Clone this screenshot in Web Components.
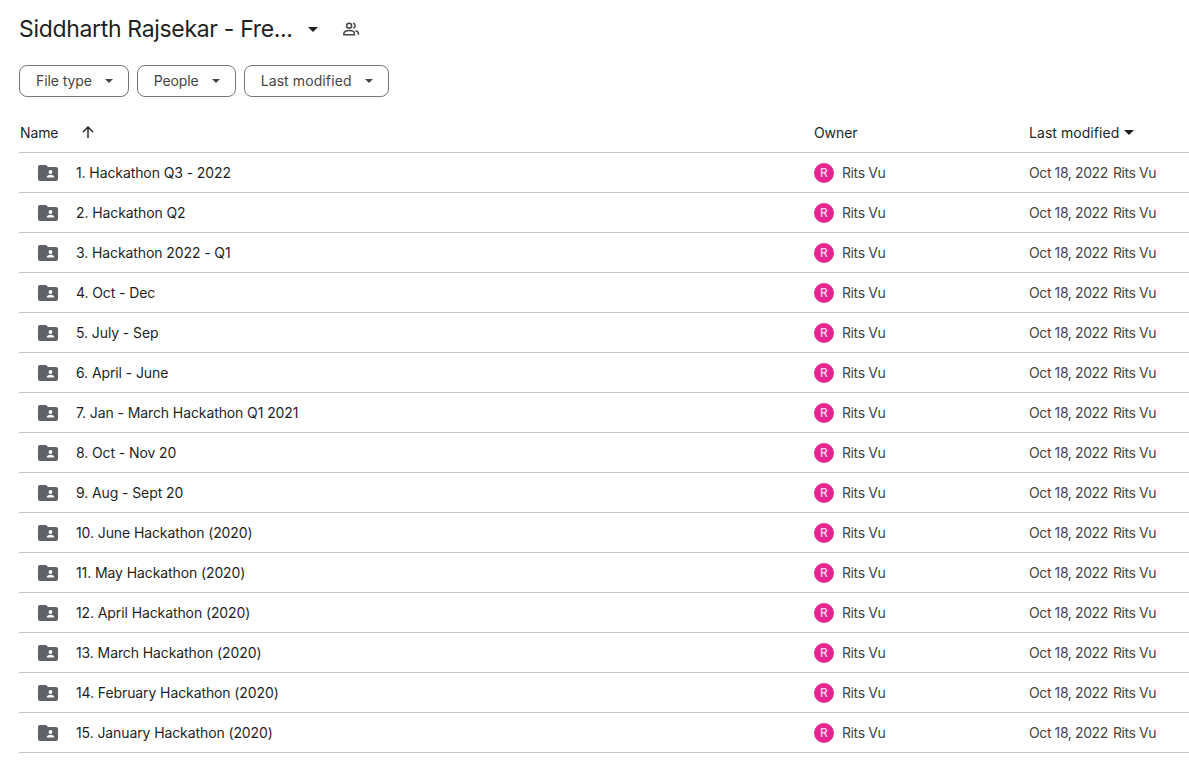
<!DOCTYPE html>
<html>
<head>
<meta charset="utf-8">
<title>Siddharth Rajsekar - Free</title>
<style>
  html, body { margin: 0; background: #fff; overflow: hidden; }
  body { font-family: Inter, Roboto, "Liberation Sans", sans-serif; color: #1f1f1f; }
</style>
</head>
<body>
<drive-page></drive-page>

<script>
const ARROW = `<svg width="10" height="5" viewBox="0 0 10 5"><path d="M0 0h10L5 5z" fill="currentColor"/></svg>`;

class DriveTitle extends HTMLElement {
  connectedCallback() {
    this.attachShadow({ mode: "open" });
    this.shadowRoot.innerHTML = `
      <style>
        :host { display: flex; align-items: center; height: 58px; padding-left: 19px; color: #1f1f1f; }
        .name { font-size: 23px; line-height: 32px; width: 276px; letter-spacing: -0.33px; white-space: nowrap; }
        .arrow { display: flex; margin-left: 13px; }
        .people { display: flex; margin-left: 24px; color: #444746; }
      </style>
      <span class="name"><slot></slot></span>
      <span class="arrow">${ARROW}</span>
      <span class="people">
        <svg width="18" height="18" viewBox="0 0 24 24" fill="none" stroke="currentColor" stroke-width="2">
          <circle cx="9.500" cy="7.500" r="3.300"/>
          <path d="M2.500 19.500v-1.800c0-2.300 3.300-3.700 7-3.700s7 1.400 7 3.700v1.800z"/>
          <path d="M15 4.300a3.300 3.300 0 0 1 0 6.400M18 14.200c2.300.6 3.800 1.800 3.800 3.500v1.800"/>
        </svg>
      </span>
    `;
  }
}
customElements.define("drive-title", DriveTitle);

class FilterChip extends HTMLElement {
  connectedCallback() {
    this.attachShadow({ mode: "open" });
    this.shadowRoot.innerHTML = `
      <style>
        :host {
          display: flex; align-items: center; box-sizing: border-box; height: 32px;
          border: 1px solid #747775; border-radius: 8px;
          padding: 0 15px 0 16px; gap: 13px;
          font-size: 14px; letter-spacing: var(--chip-spacing, -0.1px); color: #444746; white-space: nowrap;
        }
        .label { padding-bottom: 2px; }
        .arrow { display: flex; }
        svg { width: 8px; height: 4px; }
      </style>
      <span class="label"><slot></slot></span>
      <span class="arrow">${ARROW}</span>
    `;
  }
}
customElements.define("filter-chip", FilterChip);

class FileHeader extends HTMLElement {
  connectedCallback() {
    this.attachShadow({ mode: "open" });
    this.shadowRoot.innerHTML = `
      <style>
        :host {
          display: grid; grid-template-columns: 794px 215px 1fr; align-items: center;
          height: 40px; margin-left: 19px; border-bottom: 1px solid #c7c7c7; box-sizing: content-box;
          font-size: 14px; letter-spacing: -0.1px; color: #1f1f1f;
        }
        div { display: flex; align-items: center; padding-left: 1px; padding-top: 1px; }
        .up { margin-left: 22px; display: flex; margin-top: -1px; }
        .down { margin-left: 5px; display: flex; }
        .modified { letter-spacing: 0.05px; }
      </style>
      <div>Name
        <span class="up">
          <svg width="16" height="16" viewBox="0 0 16 16"><path d="M7.300 14V4.700L3.500 8.500 2.500 7.500 8 2l5.500 5.500-1 1-3.800-3.800V14z" fill="#1f1f1f"/></svg>
        </span>
      </div>
      <div>Owner</div>
      <div class="modified">Last modified<span class="down">${ARROW}</span></div>
    `;
  }
}
customElements.define("file-header", FileHeader);

class FileRow extends HTMLElement {
  connectedCallback() {
    this.attachShadow({ mode: "open" });
    this.shadowRoot.innerHTML = `
      <style>
        :host {
          display: grid; grid-template-columns: 795px 215px 1fr; align-items: center;
          height: 39px; margin-left: 19px; border-bottom: 1px solid #c7c7c7;
          font-size: 14px; letter-spacing: -0.1px; color: #444746;
        }
        .name { display: flex; align-items: center; color: #1f1f1f; padding-left: 19px; }
        .name svg { margin-right: 18px; flex: none; }
        .owner { display: flex; align-items: center; gap: 8px; letter-spacing: -0.4px; }
        .avatar {
          width: 20px; height: 20px; border-radius: 50%; background: #e52592;
          color: #fbd3e8; font-size: 12px; font-weight: 500; letter-spacing: 0;
          display: flex; align-items: center; justify-content: center;
        }
        .mod { display: flex; gap: 5px; letter-spacing: -0.4px; }
      </style>
      <div class="name">
        <svg width="20" height="16" viewBox="0 0 20 16">
          <path fill="#5f6368" d="M2 0h6l2 2h8c1.100 0 2 .9 2 2v10c0 1.100-.9 2-2 2H2c-1.100 0-2-.9-2-2V2C0 .9.900 0 2 0z"/>
          <circle cx="12.500" cy="7" r="1.900" fill="#fff"/>
          <path fill="#fff" d="M8.800 12.500v-.7c0-1.300 2.500-2 3.700-2s3.700.7 3.700 2v.7z"/>
        </svg>
        <slot></slot>
      </div>
      <div class="owner"><span class="avatar">R</span>Rits Vu</div>
      <div class="mod"><span>Oct 18, 2022</span><span>Rits Vu</span></div>
    `;
  }
}
customElements.define("file-row", FileRow);

class DrivePage extends HTMLElement {
  connectedCallback() {
    this.attachShadow({ mode: "open" });
    const names = [
      "1. Hackathon Q3 - 2022", "2. Hackathon Q2", "3. Hackathon 2022 - Q1", "4. Oct - Dec",
      "5. July - Sep", "6. April - June", "7. Jan - March Hackathon Q1 2021", "8. Oct - Nov 20",
      "9. Aug - Sept 20", "10. June Hackathon (2020)", "11. May Hackathon (2020)",
      "12. April Hackathon (2020)", "13. March Hackathon (2020)", "14. February Hackathon (2020)",
      "15. January Hackathon (2020)"
    ];
    this.shadowRoot.innerHTML = `
      <style>
        :host { display: block; width: 1189px; }
        .filters { display: flex; gap: 8px; padding-left: 19px; margin-top: 7px; margin-bottom: 15px; }
        .wide { --chip-spacing: 0.1px; }
      </style>
      <drive-title>Siddharth Rajsekar - Fre...</drive-title>
      <div class="filters">
        <filter-chip>File type</filter-chip>
        <filter-chip>People</filter-chip>
        <filter-chip class="wide">Last modified</filter-chip>
      </div>
      <file-header></file-header>
      ${names.map(n => `<file-row>${n}</file-row>`).join("")}
    `;
  }
}
customElements.define("drive-page", DrivePage);
</script>
</body>
</html>
